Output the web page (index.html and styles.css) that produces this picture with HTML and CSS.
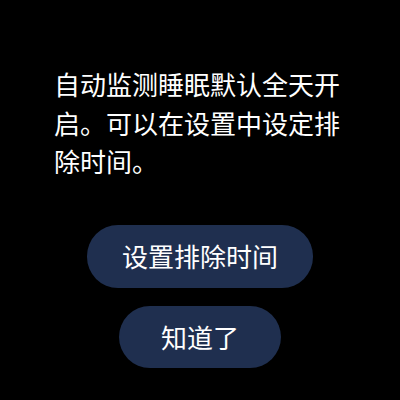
FILE: index.html
```html
<!DOCTYPE html>
<html lang="zh-CN">
<head>
<meta charset="utf-8">
<link rel="stylesheet" href="styles.css">
</head>
<body>
<div class="screen">
  <p class="message">自动监测睡眠默认全天开启。可以在设置中设定排除时间。</p>
  <div class="actions">
    <button class="pill wide">设置排除时间</button>
    <button class="pill">知道了</button>
  </div>
</div>
</body>
</html>
```
FILE: styles.css
```css
html, body {
  margin: 0;
  padding: 0;
  background: #000;
}
body {
  width: 400px;
  height: 400px;
  overflow: hidden;
  font-family: "Noto Sans CJK SC", "Noto Sans", sans-serif;
  color: #fff;
}
.screen {
  padding: 65px 54px 0 54px;
  display: flex;
  flex-direction: column;
  align-items: stretch;
}
.message {
  margin: 0;
  font-size: 26px;
  line-height: 38.5px;
}
.actions {
  margin-top: 44px;
  display: flex;
  flex-direction: column;
  align-items: center;
  gap: 18px;
}
.pill {
  border: none;
  background: #1f2f4f;
  color: #fff;
  font-family: inherit;
  font-size: 26px;
  line-height: 36px;
  height: 62px;
  border-radius: 31px;
  padding: 0 42px;
}
.pill.wide {
  height: 63px;
  padding: 0 35px;
}
```
